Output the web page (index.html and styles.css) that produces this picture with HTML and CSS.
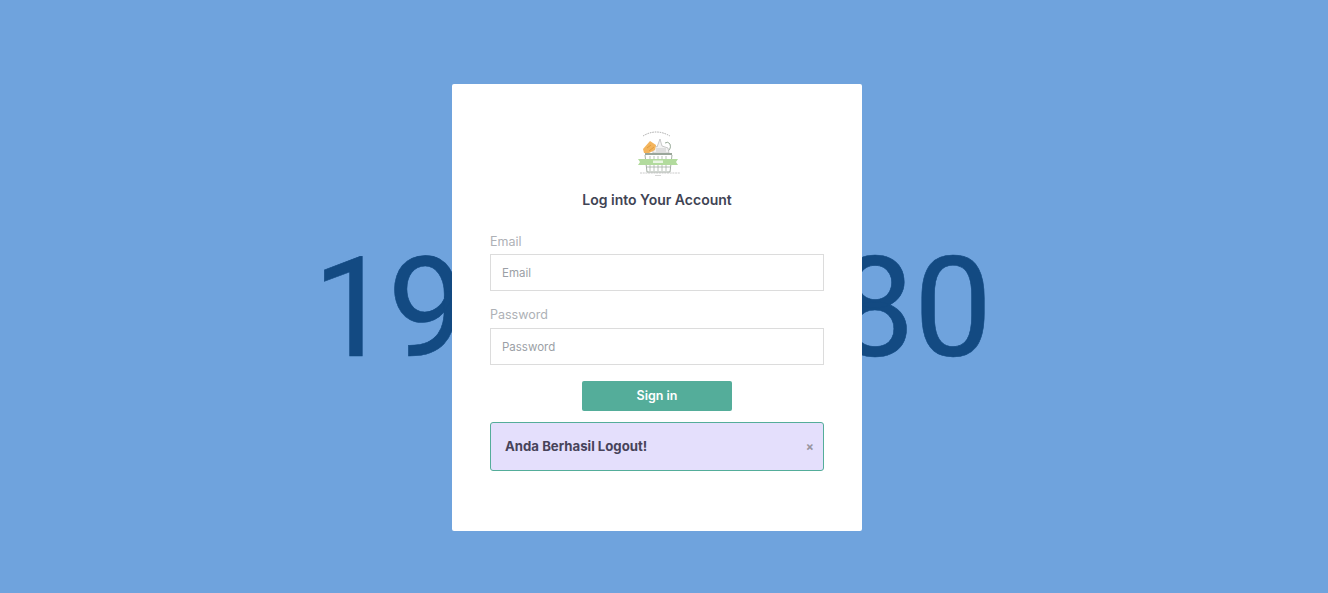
FILE: index.html
```html
<!DOCTYPE html>
<html lang="id">
<head>
<meta charset="utf-8">
<title>Log into Your Account</title>
<link rel="stylesheet" href="styles.css">
</head>
<body>
<main class="stage">
  <div class="backdrop-text"><span class="digits-left">19</span><span>80</span></div>
  <section class="card">
    <svg class="logo" viewBox="0 0 50 50" width="50" height="50" aria-hidden="true">
      <path d="M11 10Q24 2 38 10" fill="none" stroke="#a5a5a5" stroke-width="1" stroke-dasharray="1.500 1"/>
      <path d="M33 27Q40 24 38 18Q36 15 33 17" fill="none" stroke="#97a897" stroke-width="1"/>
      <path d="M20 18L25 21L28 13L30 20L36 22L37 27L21 27Z" fill="#f2f2f2" stroke="#b5b5b5" stroke-width=".7"/>
      <path d="M24 23H34M24 25H34" stroke="#b9b9b9" stroke-width=".7"/>
      <path d="M11 23L18 15L24 19L23 24L17 27L12 27Z" fill="#f3b45c"/>
      <path d="M15 22L19 19M17 25L22 21" stroke="#dc9736" stroke-width=".8"/>
      <rect x="13" y="27" width="27" height="2" fill="#9aa69a"/>
      <path d="M13 29L15 46H38L40 29" fill="#fff" stroke="#a3ada3" stroke-width="1"/>
      <path d="M18 30V45M22 30V45M26 30V45M30 30V45M34 30V45" stroke="#b9c2b9" stroke-width="1"/>
      <path d="M15 41H38" stroke="#a3ada3" stroke-width=".8"/>
      <path d="M6 33H46L44 36L46 39H6L8 36Z" fill="#b2db9d"/>
      <rect x="21" y="34.500" width="10" height="2.500" fill="#e9f5e3"/>
      <path d="M8 47H48" stroke="#b5b5b5" stroke-width=".7" stroke-dasharray="2 .7"/>
      <path d="M23 49.500H29" stroke="#c5c5c5" stroke-width=".7"/>
    </svg>
    <h1 class="title">Log into Your Account</h1>
    <form class="form">
      <div class="field">
        <label class="label" for="email">Email</label>
        <input class="input" id="email" type="text" placeholder="Email">
      </div>
      <div class="field field-password">
        <label class="label" for="password">Password</label>
        <input class="input" id="password" type="password" placeholder="Password">
      </div>
      <button class="submit" type="button">Sign in</button>
      <div class="alert">
        <strong class="alert-text">Anda Berhasil Logout!</strong>
        <span class="alert-close">×</span>
      </div>
    </form>
  </section>
</main>
</body>
</html>
```
FILE: styles.css
```css
* { box-sizing: border-box; }
html, body { margin: 0; height: 100%; overflow: hidden; }
body {
  background: #6fa3dd;
  font-family: "Inter", "Liberation Sans", sans-serif;
}
.stage {
  display: grid;
  width: 1314px;
  height: 100%;
  padding-top: 84px;
  padding-bottom: 62px;
  justify-items: center;
  align-items: center;
}
.backdrop-text {
  grid-area: 1 / 1;
  display: flex;
  gap: 373px;
  padding: 2px 9px 0 0;
  font-family: "Roboto", "Liberation Sans", sans-serif;
  font-size: 139px;
  line-height: 1;
  color: #134a82;
  -webkit-text-stroke: 0.6px #134a82;
  white-space: nowrap;
}
.digits-left { letter-spacing: -3px; }
.card {
  grid-area: 1 / 1;
  z-index: 1;
  width: 410px;
  height: 447px;
  background: #fff;
  border-radius: 2px;
  padding: 42px 38px 0;
  display: flex;
  flex-direction: column;
  align-items: center;
}
.logo { display: block; filter: blur(0.3px); }
.title {
  margin: 14px 0 0;
  font-size: 14px;
  line-height: 20px;
  font-weight: 600;
  color: #3f4454;
  white-space: nowrap;
}
.form {
  width: 100%;
  margin-top: 23px;
  display: flex;
  flex-direction: column;
  align-items: center;
}
.field { width: 100%; margin-bottom: 15px; }
.field-password { margin-bottom: 16px; }
.label {
  display: block;
  font-size: 12.500px;
  line-height: 18px;
  color: #aeb1b6;
  margin-bottom: 3px;
}
.field-password .label { margin-bottom: 4px; }
.input {
  display: block;
  width: 100%;
  height: 37px;
  border: 1px solid #dcdcdc;
  border-radius: 0;
  padding: 0 11px;
  font: 400 11.500px "Inter", "Liberation Sans", sans-serif;
  outline: none;
}
.input::placeholder { color: #9b9fa6; opacity: 1; }
.submit {
  width: 150px;
  height: 30px;
  border: 0;
  border-radius: 2px;
  padding: 0 0 1px;
  background: #54ad9a;
  color: #fff;
  font: 600 12.500px "Inter", "Liberation Sans", sans-serif;
}
.alert {
  width: 100%;
  height: 49px;
  margin-top: 11px;
  background: #e4dffc;
  border: 1px solid #54ad9a;
  border-radius: 3px;
  padding: 0 9px 1px 14px;
  display: flex;
  align-items: center;
  justify-content: space-between;
  color: #47435a;
}
.alert-text { font-size: 13.200px; font-weight: 700; }
.alert-close { font-size: 12px; font-weight: 700; color: #97949f; }
```
